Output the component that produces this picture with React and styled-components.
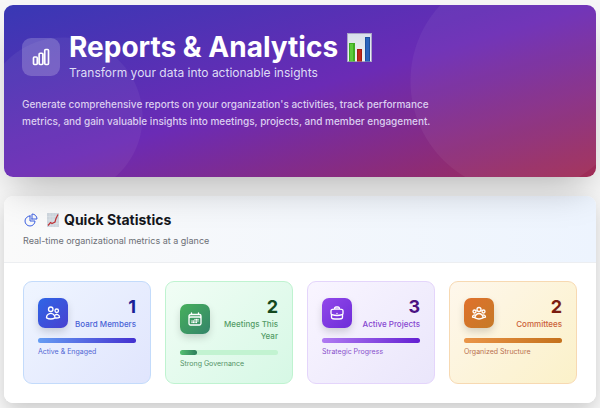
import React from 'react';
import styled, { createGlobalStyle } from 'styled-components';
import {
  HiOutlineBriefcase,
  HiOutlineCalendarDays,
  HiOutlineChartBar,
  HiOutlineChartPie,
  HiOutlineUserGroup,
  HiOutlineUsers,
} from 'react-icons/hi2';

const stats = [
  {
    label: 'Board Members',
    value: 1,
    note: 'Active & Engaged',
    percent: 100,
    icon: HiOutlineUsers,
    theme: {
      card: 'linear-gradient(135deg, #eff5ff, #e0e5fd)',
      border: '#c3dbfb',
      icon: 'linear-gradient(135deg, #2f66e6, #4840d0)',
      value: '#1a1f96',
      label: '#4a63d6',
      note: '#5268d4',
      track: '#c3dbfb',
      bar: 'linear-gradient(90deg, #659df3, #4430d0)',
    },
  },
  {
    label: 'Meetings This Year',
    value: 2,
    note: 'Strong Governance',
    percent: 17,
    icon: HiOutlineCalendarDays,
    theme: {
      card: 'linear-gradient(135deg, #f1fdf5, #d6f8e5)',
      border: '#bff3d0',
      icon: 'linear-gradient(135deg, #47b05c, #34846a)',
      value: '#14491f',
      label: '#549c67',
      note: '#529366',
      track: '#c2f3d1',
      bar: 'linear-gradient(90deg, #56c273, #2d7d5c)',
    },
  },
  {
    label: 'Active Projects',
    value: 3,
    note: 'Strategic Progress',
    percent: 100,
    icon: HiOutlineBriefcase,
    theme: {
      card: 'linear-gradient(135deg, #f9f5ff, #eae6fb)',
      border: '#e4d5fb',
      icon: 'linear-gradient(135deg, #9148ea, #6e2cd8)',
      value: '#4b1282',
      label: '#8646d0',
      note: '#8850cc',
      track: '#e4d5fb',
      bar: 'linear-gradient(90deg, #b07bf2, #6420d2)',
    },
  },
  {
    label: 'Committees',
    value: 2,
    note: 'Organized Structure',
    percent: 100,
    icon: HiOutlineUserGroup,
    theme: {
      card: 'linear-gradient(135deg, #fef7ec, #fbf1c9)',
      border: '#f7d9b2',
      icon: 'linear-gradient(135deg, #e0712c, #c57a28)',
      value: '#7a1c10',
      label: '#cb6038',
      note: '#b9704e',
      track: '#f7d9b2',
      bar: 'linear-gradient(90deg, #ea9548, #c4711c)',
    },
  },
];

const BarsEmoji = () => (
  <TitleEmoji viewBox="0 0 25 29" role="img" aria-label="Bar chart">
    <defs>
      <linearGradient id="sheet" x1="0" y1="0" x2="0" y2="1">
        <stop offset="0" stopColor="#d8dfea" />
        <stop offset="1" stopColor="#f1f3f5" />
      </linearGradient>
    </defs>
    <rect x="0.5" y="0.5" width="24" height="28" fill="url(#sheet)" stroke="#a9a6c6" />
    <rect x="2" y="10" width="6" height="18.5" fill="#3fae22" />
    <rect x="3" y="11" width="3" height="17" fill="#5cc93c" />
    <rect x="10" y="16" width="5" height="12.5" fill="#a31a12" />
    <rect x="11" y="17" width="3" height="11" fill="#bd281c" />
    <rect x="18" y="4" width="5" height="24.5" fill="#1c4f9f" />
    <rect x="19" y="5" width="3" height="23" fill="#2a63bd" />
  </TitleEmoji>
);

const TrendEmoji = () => (
  <HeadingEmoji viewBox="0 0 12 14" role="img" aria-label="Rising chart">
    <rect width="12" height="14" fill="#cfd7df" />
    <path d="M0 3.5h12M0 7h12M0 10.5h12M3 0v14M6 0v14M9 0v14" stroke="#e0e6eb" strokeWidth="0.5" />
    <path d="M1 12.5l2.5-3 1.5 1 3-1.5 1-3.5 2-4" fill="none" stroke="#bf3438" strokeWidth="1.2" />
  </HeadingEmoji>
);

const StatCard = ({ stat }) => {
  const Icon = stat.icon;
  return (
    <Stat $theme={stat.theme}>
      <StatTop>
        <StatIcon $background={stat.theme.icon}>
          <Icon />
        </StatIcon>
        <StatText>
          <StatValue $color={stat.theme.value}>{stat.value}</StatValue>
          <StatLabel $color={stat.theme.label}>{stat.label}</StatLabel>
        </StatText>
      </StatTop>
      <Track $color={stat.theme.track}>
        <Fill $background={stat.theme.bar} style={{ width: `${stat.percent}%` }} />
      </Track>
      <StatNote $color={stat.theme.note}>{stat.note}</StatNote>
    </Stat>
  );
};

const App = () => (
  <>
    <GlobalStyle />
    <Page>
      <Hero>
        <HeroTop>
          <HeroIcon>
            <HiOutlineChartBar />
          </HeroIcon>
          <div>
            <Title>
              Reports &amp; Analytics <BarsEmoji />
            </Title>
            <Tagline>Transform your data into actionable insights</Tagline>
          </div>
        </HeroTop>
        <Description>
          Generate comprehensive reports on your organization's activities, track performance
          metrics, and gain valuable insights into meetings, projects, and member engagement.
        </Description>
      </Hero>
      <Panel>
        <PanelHeader>
          <Heading>
            <HiOutlineChartPie />
            <TrendEmoji />
            Quick Statistics
          </Heading>
          <Subheading>Real-time organizational metrics at a glance</Subheading>
        </PanelHeader>
        <StatGrid>
          {stats.map((stat) => (
            <StatCard key={stat.label} stat={stat} />
          ))}
        </StatGrid>
      </Panel>
    </Page>
  </>
);

const GlobalStyle = createGlobalStyle`
  * {
    box-sizing: border-box;
  }

  body {
    margin: 0;
    background: #f7f7f7;
    font-family: Inter, sans-serif;
  }

  h1, h2, p {
    margin: 0;
  }
`;

const Page = styled.main`
  display: flex;
  flex-direction: column;
  gap: 19px;
  padding: 5px 4px;
`;

const Hero = styled.header`
  position: relative;
  padding: 26px 18px 47px;
  border-radius: 9px;
  color: #fff;
  background: linear-gradient(to bottom right, #3838b4, #6b2bb5 50%, #a02c54);
  box-shadow: 0 20px 36px -10px rgba(0, 0, 0, 0.26);

  /* translucent circles behind the text */
  &::before {
    content: '';
    position: absolute;
    inset: 0;
    border-radius: 9px;
    background:
      radial-gradient(circle 112px at calc(100% - 74px) 76px, rgba(255, 255, 255, 0.05) 111px, transparent 112px),
      radial-gradient(circle 80px at 59px 112px, rgba(255, 255, 255, 0.05) 79px, transparent 80px);
  }
`;

const HeroTop = styled.div`
  position: relative;
  display: flex;
  align-items: center;
  gap: 9px;
`;

const HeroIcon = styled.div`
  display: flex;
  align-items: center;
  justify-content: center;
  flex-shrink: 0;
  width: 38px;
  height: 38px;
  border-radius: 9px;
  background: rgba(255, 255, 255, 0.2);

  svg {
    width: 20px;
    height: 20px;
    stroke-width: 2;
  }
`;

const Title = styled.h1`
  display: flex;
  align-items: center;
  gap: 9px;
  font-size: 28px;
  font-weight: 700;
  line-height: 32px;
`;

const TitleEmoji = styled.svg`
  width: 25px;
  height: 29px;
`;

const Tagline = styled.p`
  font-size: 12px;
  line-height: 20px;
  color: #dedcf6;
`;

const Description = styled.p`
  position: relative;
  max-width: 432px;
  margin-top: 13px;
  font-size: 10px;
  font-weight: 500;
  line-height: 17px;
  color: #dccff0;
`;

const Panel = styled.section`
  border-radius: 9px;
  background: rgba(255, 255, 255, 0.8);
  box-shadow: 0 8px 20px -2px rgba(0, 0, 0, 0.2);
  overflow: hidden;
`;

const PanelHeader = styled.div`
  padding: 14px 19px;
  border-bottom: 1px solid #eceef1;
  background: linear-gradient(90deg, #fafafa, #edf4fe);
`;

const Heading = styled.h2`
  display: flex;
  align-items: center;
  font-size: 14px;
  font-weight: 700;
  line-height: 20px;
  color: #14161c;

  > svg:first-child {
    width: 16px;
    height: 16px;
    margin-right: 8px;
    color: #3b5fe0;
  }
`;

const HeadingEmoji = styled.svg`
  width: 12px;
  height: 14px;
  margin-right: 5px;
`;

const Subheading = styled.p`
  margin-top: 4px;
  font-size: 9px;
  line-height: 14px;
  color: #6c6f76;
`;

const StatGrid = styled.div`
  display: grid;
  grid-template-columns: repeat(4, 1fr);
  gap: 14px;
  padding: 18px 19px 19px;
  background: #fff;
`;

const Stat = styled.article`
  padding: 14px;
  border: 1px solid ${({ $theme }) => $theme.border};
  border-radius: 9px;
  background: ${({ $theme }) => $theme.card};
`;

const StatTop = styled.div`
  display: flex;
  align-items: center;
  justify-content: space-between;
  gap: 4px;
`;

const StatIcon = styled.div`
  display: flex;
  align-items: center;
  justify-content: center;
  flex-shrink: 0;
  width: 30px;
  height: 30px;
  border-radius: 7px;
  color: #fff;
  background: ${({ $background }) => $background};
  box-shadow: 0 4px 8px -1px rgba(0, 0, 0, 0.18);

  svg {
    width: 16px;
    height: 16px;
    stroke-width: 2;
  }
`;

const StatText = styled.div`
  text-align: right;
`;

const StatValue = styled.p`
  font-size: 18px;
  font-weight: 700;
  line-height: 22px;
  color: ${({ $color }) => $color};
`;

const StatLabel = styled.p`
  font-size: 8px;
  font-weight: 500;
  line-height: 12px;
  color: ${({ $color }) => $color};
`;

const Track = styled.div`
  height: 5px;
  margin-top: 8px;
  border-radius: 3px;
  background: ${({ $color }) => $color};
`;

const Fill = styled.div`
  height: 100%;
  border-radius: 3px;
  background: ${({ $background }) => $background};
`;

const StatNote = styled.p`
  margin-top: 4px;
  font-size: 7px;
  line-height: 10px;
  color: ${({ $color }) => $color};
`;

export default App;
